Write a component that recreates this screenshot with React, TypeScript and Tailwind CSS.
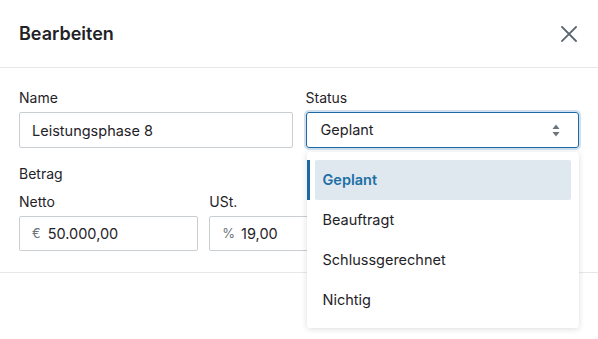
import React from 'react';

const options = ['Geplant', 'Beauftragt', 'Schlussgerechnet', 'Nichtig'];

export default function App() {
    return (
        <div className="w-[598px] h-[339px] overflow-hidden bg-white text-[#1f2328]" style={{ fontFamily: 'Inter, "Noto Sans", sans-serif' }}>
            <div className="h-[68px] flex items-center justify-between px-[19px] border-b border-[#e5e7ea]">
                <h2 className="text-[18px] font-semibold leading-none">Bearbeiten</h2>
                <button className="w-[16px] h-[16px] mr-[2px] text-[#5b6670]">
                    <svg viewBox="0 0 16 16" width="16" height="16" fill="none" stroke="currentColor" strokeWidth="1.8" strokeLinecap="square">
                        <path d="M1 1L15 15M15 1L1 15" />
                    </svg>
                </button>
            </div>

            <div className="px-[19px] pt-[20px] pb-[21px] border-b border-[#e5e7ea]">
                <div className="grid grid-cols-2 gap-[13px]">
                    <div>
                        <label className="block text-[14px] leading-[20px] mb-[4px]">Name</label>
                        <input
                            readOnly
                            value="Leistungsphase 8"
                            className="w-full h-[36px] border border-[#c9ced3] rounded-[2px] px-3 text-[14.5px] outline-none"
                        />
                    </div>
                    <div className="relative">
                        <label className="block text-[14px] leading-[20px] mb-[4px]">Status</label>
                        <div className="h-[36px] border border-[#1d6aa2] rounded-[3px] ring-2 ring-[#cfe1f0] pl-[14px] pr-[18px] flex items-center justify-between text-[14.5px]">
                            <span>Geplant</span>
                            <svg width="8" height="13" viewBox="0 0 8 13" fill="#6b747c">
                                <path d="M4 0.5L7.5 5H0.5Z" />
                                <path d="M4 12.5L7.5 8H0.5Z" />
                            </svg>
                        </div>

                        <div className="absolute left-[1px] right-0 top-[64px] z-10 bg-white rounded-[3px] shadow-[0_1px_6px_rgba(0,0,0,0.14)] py-2">
                            {options.map((opt, i) => (
                                <div key={opt} className="relative px-2">
                                    {i === 0 && <div className="absolute left-0 top-0 bottom-0 w-[3px] bg-[#1d6aa2]" />}
                                    <div
                                        className={
                                            i === 0
                                                ? 'h-[40px] flex items-center px-2 rounded-[2px] bg-[#dfe8ef] text-[#1d6fa5] font-semibold text-[14.5px]'
                                                : 'h-[40px] flex items-center px-2 text-[14.5px]'
                                        }
                                    >
                                        {opt}
                                    </div>
                                </div>
                            ))}
                        </div>
                    </div>
                </div>

                <div className="text-[14px] leading-[20px] mt-[16px]">Betrag</div>
                <div className="grid grid-cols-3 gap-[11px] mt-[8px]">
                    <div>
                        <label className="block text-[14px] leading-[20px] mb-[4px]">Netto</label>
                        <div className="h-[35px] border border-[#c9ced3] rounded-[2px] px-3 flex items-center gap-[7px] text-[14.5px]">
                            <span className="text-[#6b737b] text-[13px]">€</span>
                            <span>50.000,00</span>
                        </div>
                    </div>
                    <div>
                        <label className="block text-[14px] leading-[20px] mb-[4px]">USt.</label>
                        <div className="h-[35px] border border-[#c9ced3] rounded-[2px] px-3 flex items-center gap-[6px] text-[14.5px]">
                            <span className="text-[#6b737b] text-[13px]">%</span>
                            <span>19,00</span>
                        </div>
                    </div>
                    <div>
                        <label className="block text-[14px] leading-[20px] mb-[4px]">Brutto</label>
                        <div className="h-[35px] border border-[#c9ced3] rounded-[2px] px-3 flex items-center gap-[7px] text-[14.5px]">
                            <span className="text-[#6b737b] text-[13px]">€</span>
                            <span>59.500,00</span>
                        </div>
                    </div>
                </div>
            </div>

            <div className="px-[19px] pt-[16px] flex justify-end gap-3">
                <button className="h-[36px] px-4 border border-[#c9ced3] rounded-[2px] text-[14.5px]">Abbrechen</button>
                <button className="h-[36px] px-4 bg-[#1d6aa2] text-white rounded-[2px] text-[14.5px] font-semibold">Speichern</button>
            </div>
        </div>
    );
}
